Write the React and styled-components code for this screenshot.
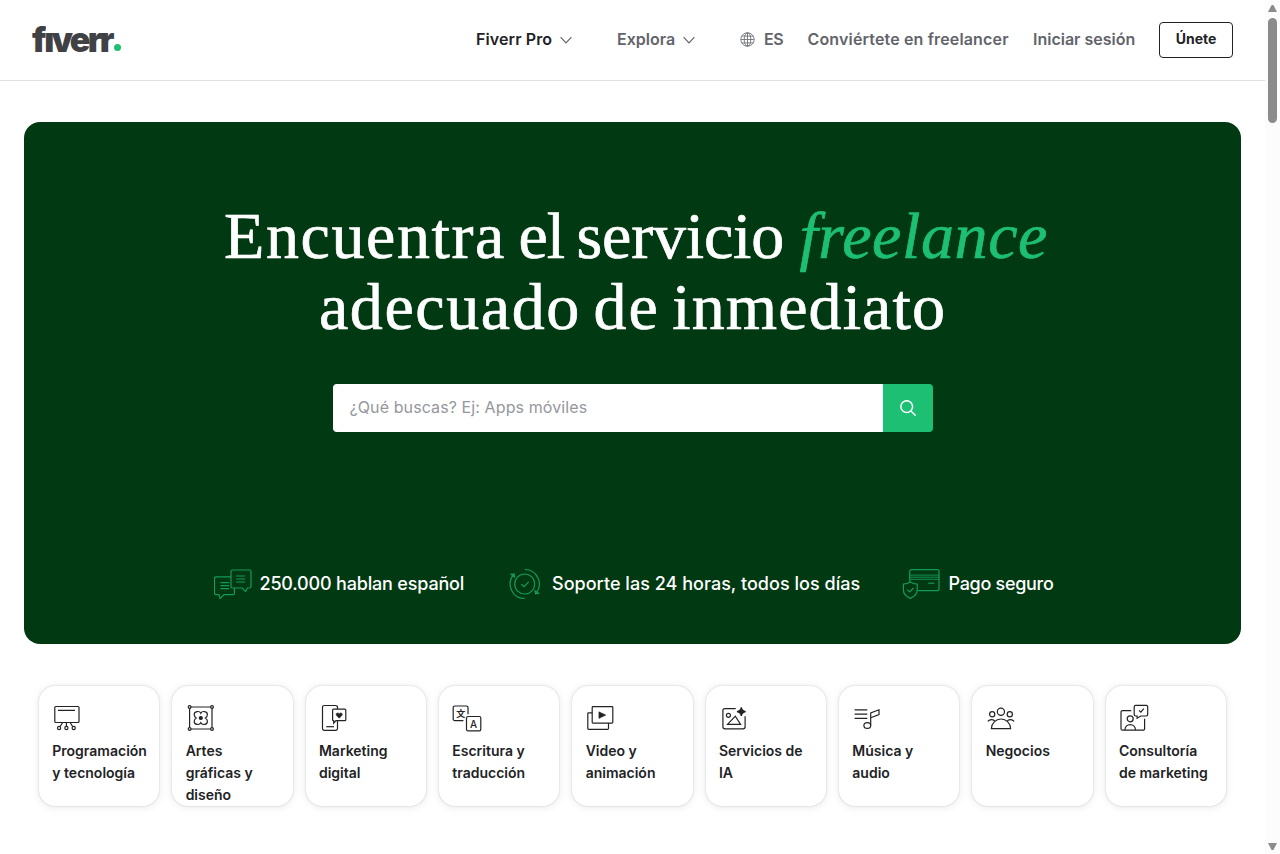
import React from "react";
import styled, { createGlobalStyle } from "styled-components";

const GlobalStyle = createGlobalStyle`
  * {
    box-sizing: border-box;
  }
  body {
    margin: 0;
    overflow: hidden;
    background: #fff;
    font-family: Inter, "Liberation Sans", sans-serif;
    color: #222325;
  }
`;

const benefits = [
  { label: "250.000 hablan español", icon: "chat", width: 249, iconWidth: 38, gap: 7.5, track: -0.18 },
  { label: "Soporte las 24 horas, todos los días", icon: "support", width: 349, iconWidth: 34, gap: 10, track: 0.03 },
  { label: "Pago seguro", icon: "payment", width: 106, iconWidth: 38, gap: 8.5, track: -0.3 },
];

const categories = [
  { lines: ["Programación", "y tecnología"], icon: "code" },
  { lines: ["Artes", "gráficas y", "diseño"], icon: "design" },
  { lines: ["Marketing", "digital"], icon: "marketing" },
  { lines: ["Escritura y", "traducción"], icon: "writing" },
  { lines: ["Video y", "animación"], icon: "video" },
  { lines: ["Servicios de", "IA"], icon: "ai" },
  { lines: ["Música y", "audio"], icon: "music" },
  { lines: ["Negocios"], icon: "business" },
  { lines: ["Consultoría", "de marketing"], icon: "consulting" },
];

const benefitIcons = {
  chat: (
    <>
      <path d="M18.5 2h17a1.5 1.5 0 0 1 1.5 1.5v15a1.5 1.5 0 0 1-1.5 1.5h-2.2l-1.6 3.5-3.6-3.5h-9.6a1.5 1.5 0 0 1-1.5-1.5v-15A1.5 1.5 0 0 1 18.5 2z" />
      <path d="M17 8.8H2a1.5 1.5 0 0 0-1.5 1.5v14.9A1.5 1.5 0 0 0 2 26.7h2.9l1.3 3.9 3.7-3.9h9a1.5 1.5 0 0 0 1.5-1.5V20" />
      <path d="M22.2 8h9M22.2 11h9M22.2 14h9M6.5 14.7h8.6M6.5 17.7h8.6M6.5 20.7h8.6" />
    </>
  ),
  support: (
    <>
      <circle cx="16.7" cy="16" r="10" />
      <path d="M13.4 16.2l2.6 2.5 4.7-4.8" />
      <path d="M16.7 30.5A14.5 14.5 0 0 1 5.6 6.7" />
      <path d="M16.7 1.5a14.5 14.5 0 0 1 11.4 23.6" />
      <path d="M3.2 6.4l3-.5.2 3zM27 22.8l.6 3 3-.4z" fill="#169a58" />
    </>
  ),
  payment: (
    <>
      <path d="M7.7 13.4V3.7a2 2 0 0 1 2-2H35a2 2 0 0 1 2 2v17a2 2 0 0 1-2 2H15.5" />
      <path d="M7.7 7.1H37M7.7 9.2H37M7.7 11.3H37" strokeWidth=".9" />
      <path d="M26.3 15.2h6" />
      <path d="M8.3 13.7c2 1.6 4.2 2.3 6.9 2.5v5.6c0 3.9-2.8 6.9-6.9 8.6-4.1-1.7-6.9-4.7-6.9-8.6v-5.6c2.7-.2 4.9-.9 6.9-2.5z" />
      <path d="M5.2 21.6l2.5 2.4 3.8-4" />
    </>
  ),
};

const categoryIcons = {
  code: (
    <>
      <rect x="2.8" y="4.5" width="24.2" height="16" rx="1" />
      <path d="M6 8.4h17M10.5 20.8l-2.3 3.7M14.4 20.5v3.7M18.3 20.8l2.3 3.7" />
      <circle cx="7.1" cy="26" r="1.6" />
      <circle cx="14.4" cy="26" r="1.6" />
      <circle cx="21.7" cy="26" r="1.6" />
    </>
  ),
  design: (
    <>
      <path d="M5 5h19.6M5 27h19.6M3.6 6.4v19.2M26 6.4v19.2" />
      <circle cx="3.6" cy="5" r="1.4" />
      <circle cx="26" cy="5" r="1.4" />
      <circle cx="3.6" cy="27" r="1.4" />
      <circle cx="26" cy="27" r="1.4" />
      <path d="M14.8 11.2c1.2-2.6 6.6-2.2 6.6 1.3 0 1.6-.9 2.8-2 3.5 1.1.7 2 1.9 2 3.5 0 3.5-5.4 3.9-6.6 1.3-1.2 2.6-6.6 2.2-6.6-1.3 0-1.6.9-2.8 2-3.5-1.1-.7-2-1.9-2-3.5 0-3.5 5.4-3.9 6.6-1.3z" />
      <circle cx="14.8" cy="16" r="1.5" fill="currentColor" />
    </>
  ),
  marketing: (
    <>
      <path d="M18.5 7V5.3a1.8 1.8 0 0 0-1.8-1.8H5.3a1.8 1.8 0 0 0-1.8 1.8v21.2a1.8 1.8 0 0 0 1.8 1.8h11.4a1.8 1.8 0 0 0 1.8-1.8v-7.6" />
      <path d="M7.2 24.7H15" />
      <path d="M14.7 7.2h11.1a1 1 0 0 1 1 1v9.5a1 1 0 0 1-1 1H17l-2.3 2.5v-2.5a1 1 0 0 1-1.1-1V8.2a1 1 0 0 1 1.1-1z" />
      <path d="M20.2 16.2l-2.7-2.8c-1.4-1.6 1-3.6 2.7-1.7 1.7-1.9 4.1.1 2.7 1.7z" fill="currentColor" strokeWidth=".6" />
    </>
  ),
  writing: (
    <>
      <path d="M16 12.3V5.7A1.6 1.6 0 0 0 14.4 4H2.8a1.6 1.6 0 0 0-1.6 1.7V17a1.6 1.6 0 0 0 1.6 1.7h8.6" />
      <rect x="14.5" y="14.5" width="14.3" height="14.3" rx="1.6" />
      <text x="4.2" y="14.8" fontSize="9" fontWeight="700" fontFamily="Noto Sans CJK SC, sans-serif" fill="currentColor" stroke="none">文</text>
      <text x="18" y="25.7" fontSize="10" fontWeight="500" fontFamily="Inter, sans-serif" fill="currentColor" stroke="none">A</text>
    </>
  ),
  video: (
    <>
      <rect x="6.2" y="4.7" width="20.6" height="16.4" rx=".8" />
      <path d="M6.2 10.8H2.6a.8.8 0 0 0-.8.8v15a.8.8 0 0 0 .8.8h19.1a.8.8 0 0 0 .8-.8v-5.5" />
      <path d="M12.9 9.8v6.6l7-3.3z" fill="currentColor" strokeWidth=".5" />
    </>
  ),
  ai: (
    <>
      <path d="M16.7 6.6H5.9a2 2 0 0 0-2 2v16.2a2 2 0 0 0 2 2h18.2a2 2 0 0 0 2-2V14.3" />
      <circle cx="9.4" cy="13.3" r="2" />
      <path d="M8.5 22.3l7.8-8.2 5.3 8.2z" />
      <path d="M22.3 5.4c.5 2.9 1.4 3.8 4.3 4.3-2.9.5-3.8 1.4-4.3 4.3-.5-2.9-1.4-3.8-4.3-4.3 2.9-.5 3.8-1.4 4.3-4.3z" fill="currentColor" />
    </>
  ),
  music: (
    <>
      <path d="M2.6 7.9h12.7M2.6 12.1h12.7M2.6 16.3h12.7" />
      <path d="M18.7 23.3V11l8.3-3.2v4.8l-8.3 3.1" />
      <ellipse cx="15.3" cy="23.5" rx="3.4" ry="2.9" />
    </>
  ),
  business: (
    <>
      <circle cx="14.9" cy="9.7" r="3.6" />
      <circle cx="6.2" cy="12.2" r="2.6" />
      <circle cx="23.8" cy="12.2" r="2.6" />
      <path d="M5.4 26.6a9.6 9.6 0 0 1 19.2 0z" />
      <path d="M1.8 19.4c1.7-1.9 4.4-2.3 7-.7M28.2 19.4c-1.7-1.9-4.4-2.3-7-.7" />
    </>
  ),
  consulting: (
    <>
      <path d="M12.3 8.6H3.5A1.5 1.5 0 0 0 2 10.1v16.6a1.5 1.5 0 0 0 1.5 1.5h20.6a1.5 1.5 0 0 0 1.5-1.5v-10" />
      <circle cx="11.2" cy="16.8" r="3" />
      <path d="M5.9 28c.2-7.2 10.4-7.2 10.6 0" />
      <path d="M16.6 3.3h10.7a1.4 1.4 0 0 1 1.4 1.4v7.9a1.4 1.4 0 0 1-1.4 1.4h-5.5l-3.7 2.2V14h-1.5a1.4 1.4 0 0 1-1.4-1.4V4.7a1.4 1.4 0 0 1 1.4-1.4z" />
      <path d="M20 8.4l1.8 1.7 3-3.4" />
    </>
  ),
};

const Chevron = () => (
  <svg width="12" height="8" viewBox="0 0 12 8" fill="none" stroke="#62646a" strokeWidth="1.2">
    <path d="M.6 1.2L6 6.8l5.4-5.6" />
  </svg>
);

const Globe = () => (
  <svg width="15" height="15" viewBox="0 0 15 15" fill="none" stroke="currentColor" strokeWidth=".8">
    <circle cx="7.5" cy="7.5" r="6.7" />
    <ellipse cx="7.5" cy="7.5" rx="3.3" ry="6.7" />
    <path d="M7.5.8v13.4M.8 7.5h13.4M1.7 4.1h11.6M1.7 10.9h11.6" />
  </svg>
);

export default function App() {
  return (
    <Page>
      <GlobalStyle />
      <Content>
        <Header>
          <Logo>fiverr</Logo>
          <Nav>
            <NavItem $dark $width={141}>
              <NavText $track={0.1}>Fiverr Pro</NavText>
              <Chevron />
            </NavItem>
            <NavItem $width={123}>
              <NavText>Explora</NavText>
              <Chevron />
            </NavItem>
            <NavItem $width={67.5} $gap={9}>
              <Globe />
              <NavText $track={-0.4}>ES</NavText>
            </NavItem>
            <NavItem $width={225.5}>
              <NavText $track={0.15}>Conviértete en freelancer</NavText>
            </NavItem>
            <NavItem $width={126}>
              <NavText>Iniciar sesión</NavText>
            </NavItem>
            <JoinButton>Únete</JoinButton>
          </Nav>
        </Header>
        <Hero>
          <Title>
            <TitleLine $indent={7}>
              <Word $track={1.6}>Encuentra</Word> <Word $track={-1}>el</Word> <Word $track={-0.2}>servicio</Word>{" "}
              <Accent>freelance</Accent>
            </TitleLine>
            <TitleLine $indent={0}>
              <Word $track={1.6}>adecuado</Word> <Word $track={2}>de</Word> <Word $track={1.1}>inmediato</Word>
            </TitleLine>
          </Title>
          <SearchBar>
            <SearchInput placeholder="¿Qué buscas? Ej: Apps móviles" />
            <SearchButton aria-label="Buscar">
              <svg width="18" height="18" viewBox="0 0 18 18" fill="none" stroke="#fff" strokeWidth="1.5">
                <circle cx="7.7" cy="7.6" r="5.9" />
                <path d="M12 12l4.7 4.7" />
              </svg>
            </SearchButton>
          </SearchBar>
          <Benefits>
            {benefits.map((item) => (
              <Benefit key={item.icon} $width={item.width} $gap={item.gap} $track={item.track}>
                <BenefitIcon width={item.iconWidth} height="32" viewBox={`0 0 ${item.iconWidth} 32`}>
                  {benefitIcons[item.icon]}
                </BenefitIcon>
                <span>{item.label}</span>
              </Benefit>
            ))}
          </Benefits>
        </Hero>
        <Categories>
          {categories.map((item) => (
            <Card key={item.icon}>
              <CardIcon viewBox="0 0 32 32">{categoryIcons[item.icon]}</CardIcon>
              {item.lines.map((line) => (
                <CardLine key={line}>{line}</CardLine>
              ))}
            </Card>
          ))}
        </Categories>
      </Content>
      <Scrollbar>
        <Arrow />
        <Thumb />
        <Arrow $down />
      </Scrollbar>
    </Page>
  );
}

const Page = styled.div`
  display: flex;
  width: 1280px;
  height: 854px;
`;

const Content = styled.div`
  flex: 1;
  min-width: 0;
`;

const Header = styled.header`
  display: flex;
  align-items: center;
  justify-content: space-between;
  height: 81px;
  padding: 0 32px 1px;
  border-bottom: 1px solid #dfe0e3;
`;

const Logo = styled.div`
  position: relative;
  height: 35px;
  font-size: 34px;
  line-height: 35px;
  font-weight: 900;
  letter-spacing: -2.7px;
  color: #404145;
  /* hides the dot of the i, so the hook of the f stands free */
  &::before {
    content: "";
    position: absolute;
    left: 14px;
    top: 0;
    width: 9px;
    height: 10px;
    background: #fff;
  }
  &::after {
    content: "";
    position: absolute;
    left: 82px;
    top: 22px;
    width: 7px;
    height: 7px;
    border-radius: 50%;
    background: #1dbf73;
  }
`;

const Nav = styled.nav`
  display: flex;
  align-items: center;
`;

const NavItem = styled.div`
  display: flex;
  align-items: center;
  gap: ${({ $gap }) => $gap || 8}px;
  width: ${({ $width }) => $width}px;
  font-size: 16px;
  line-height: 24px;
  font-weight: 600;
  white-space: nowrap;
  color: ${({ $dark }) => ($dark ? "#222325" : "#62646a")};
`;

const NavText = styled.span`
  padding-bottom: 2px;
  letter-spacing: ${({ $track }) => $track || 0}px;
`;

const JoinButton = styled.button`
  width: 74px;
  height: 36px;
  padding: 0 0 3px;
  border: 1px solid #222325;
  border-radius: 4px;
  background: #fff;
  color: #222325;
  font-family: inherit;
  font-size: 14px;
  font-weight: 700;
`;

const Hero = styled.section`
  display: flex;
  flex-direction: column;
  align-items: center;
  height: 522px;
  margin: 41px 24px 0;
  padding-top: 78px;
  border-radius: 16px;
  background: #003912;
`;

const Title = styled.h1`
  margin: 0;
  color: #fff;
  font-family: "Liberation Serif", serif;
  font-weight: 400;
  font-size: 66px;
  line-height: 71px;
  text-align: center;
  word-spacing: -4px;
  -webkit-text-stroke: 0.7px currentColor;
`;

const TitleLine = styled.div`
  padding-left: ${({ $indent }) => $indent}px;
  white-space: nowrap;
`;

const Word = styled.span`
  letter-spacing: ${({ $track }) => $track}px;
`;

const Accent = styled.em`
  margin-left: 3px;
  letter-spacing: 0.6px;
  color: #1dbf73;
`;

const SearchBar = styled.form`
  display: flex;
  width: 600px;
  height: 48px;
  margin-top: 42px;
  border-radius: 4px;
  overflow: hidden;
`;

const SearchInput = styled.input`
  flex: 1;
  min-width: 0;
  border: none;
  outline: none;
  padding: 0 16px 2px 17px;
  background: #fff;
  font-family: inherit;
  font-size: 16px;
  letter-spacing: 0.1px;
  &::placeholder {
    color: #95979d;
    opacity: 1;
  }
`;

const SearchButton = styled.button`
  display: flex;
  align-items: center;
  justify-content: center;
  width: 50px;
  border: none;
  padding: 0;
  background: #1dbf73;
`;

const Benefits = styled.div`
  display: flex;
  align-self: stretch;
  margin-top: 136px;
  padding-left: 190px;
`;

const Benefit = styled.div`
  display: flex;
  align-items: center;
  flex: none;
  width: ${({ $width }) => $width + 45}px;
  gap: ${({ $gap }) => $gap}px;
  color: #fff;
  font-size: 18px;
  font-weight: 500;
  letter-spacing: ${({ $track }) => $track}px;
  line-height: 30px;
  white-space: nowrap;
`;

const BenefitIcon = styled.svg`
  flex: none;
  fill: none;
  stroke: #169a58;
  stroke-width: 1.2;
`;

const Categories = styled.section`
  display: grid;
  grid-template-columns: repeat(9, 1fr);
  gap: 13px;
  padding: 42px 39px 0;
`;

const Card = styled.div`
  height: 120px;
  padding: 16px 0 0 13.3px;
  border-radius: 16px;
  background: #fff;
  box-shadow: 0 0 2px rgba(0, 0, 0, 0.2), 0 1px 10px rgba(0, 0, 0, 0.09);
`;

const CardIcon = styled.svg`
  display: block;
  width: 32px;
  height: 32px;
  margin-bottom: 6px;
  color: #222325;
  fill: none;
  stroke: currentColor;
  stroke-width: 1.2;
`;

const CardLine = styled.div`
  font-size: 14px;
  line-height: 22px;
  font-weight: 600;
  white-space: nowrap;
`;

const Scrollbar = styled.aside`
  display: flex;
  flex-direction: column;
  align-items: center;
  width: 15px;
  padding: 5px 0 4px;
  background: #fcfcfc;
`;

const Arrow = styled.span`
  width: 9px;
  height: 7px;
  margin-top: ${({ $down }) => ($down ? "auto" : 0)};
  background: #8b8b8b;
  clip-path: ${({ $down }) =>
    $down ? "polygon(0 0, 100% 0, 60% 100%, 40% 100%)" : "polygon(40% 0, 60% 0, 100% 100%, 0 100%)"};
`;

const Thumb = styled.span`
  width: 9px;
  height: 105px;
  margin-top: 6px;
  border-radius: 5px;
  background: #8b8b8b;
`;
